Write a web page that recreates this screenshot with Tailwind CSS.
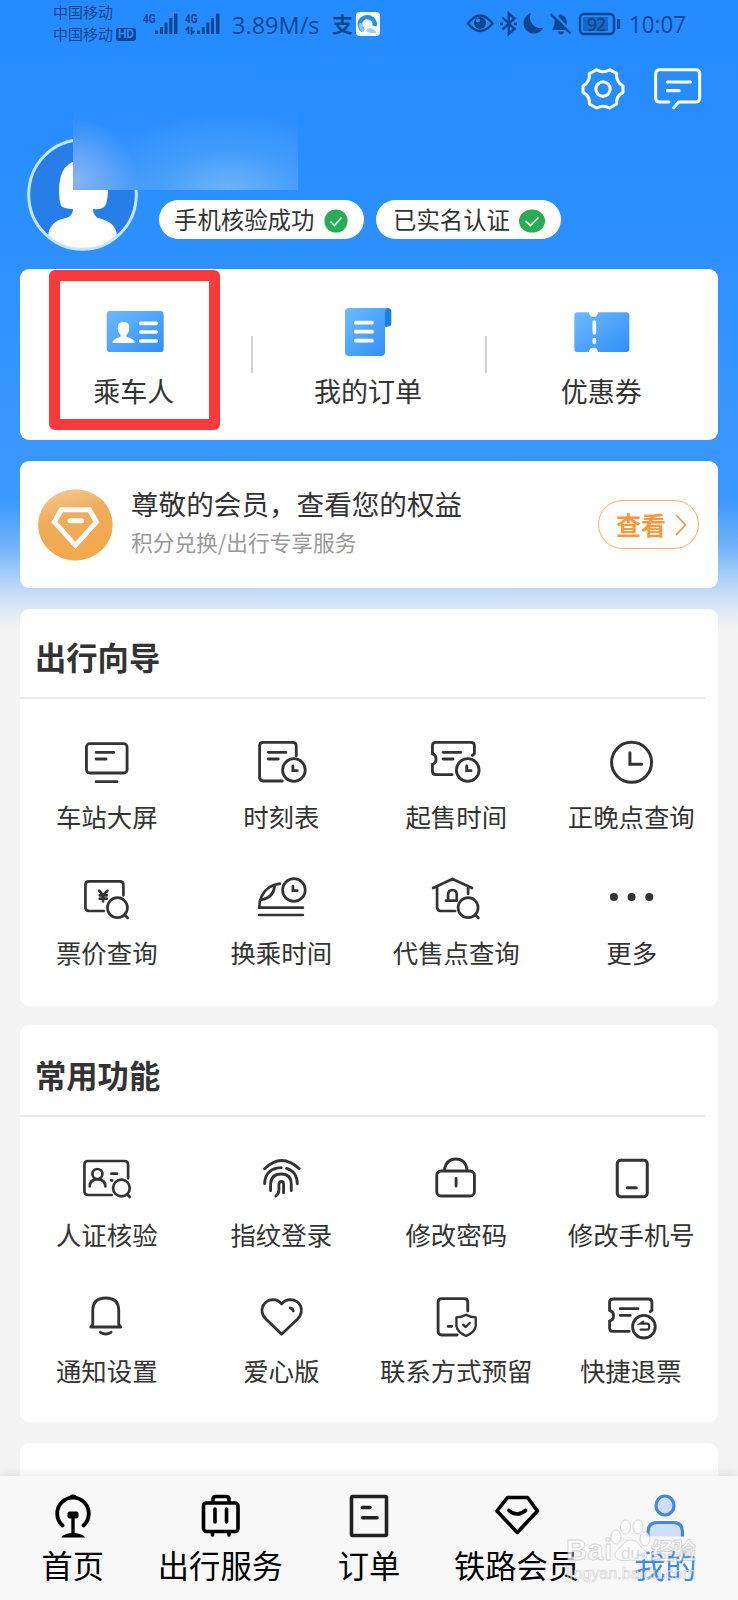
<!DOCTYPE html>
<html lang="zh-CN">
<head>
<meta charset="utf-8">
<title>我的</title>
<script src="https://cdn.jsdelivr.net/npm/@tailwindcss/browser@4"></script>
</head>
<body class="w-[738px] h-[1600px] overflow-hidden bg-[#f4f4f4] text-[#333] font-['Noto_Sans_CJK_SC','Noto_Sans',sans-serif]">
<div class="relative w-[738px] h-[1600px] overflow-hidden flex flex-col bg-[linear-gradient(180deg,#248bff_0px,#2a8fff_200px,#3896ff_430px,#3b98fe_500px,#6fb2fb_545px,#bdd8f7_588px,#dbe7f6_607px,#f4f4f4_630px)]">

  <!-- status bar -->
  <header class="h-[50px] shrink-0 flex items-start pl-[53px] text-[#0d4690]">
    <div class="w-[90px] flex flex-col pt-[1px] text-[15px] leading-[22px]">
      <span>中国移动</span>
      <span class="flex items-center gap-[3px]">中国移动<b class="w-[20px] h-[13px] rounded-[3px] bg-[#0d4690] text-[#2a8dff] text-[12px] leading-[13px] text-center font-['Roboto',sans-serif]">HD</b></span>
    </div>
    <svg class="w-[80px] h-[40px] shrink-0" viewBox="143 0 80 40" fill="#0d4690">
      <text x="143" y="22.500" font-family="Roboto" font-weight="700" font-size="13" textLength="12.500" lengthAdjust="spacingAndGlyphs">4G</text>
      <text x="185" y="22.500" font-family="Roboto" font-weight="700" font-size="13" textLength="12.500" lengthAdjust="spacingAndGlyphs">4G</text>
      <path d="M155 30.500h3v3.500h-3zM160 27h3v7h-3zM164.500 22.500h3v11.500h-3zM169.300 18h3v16h-3zM174 13.500h3.500v20.500h-3.500zM197 30.500h3v3.500h-3zM201.700 27h3v7h-3zM206.300 22.500h3v11.500h-3zM211 18h3v16h-3zM216 13.500h3.500v20.500h-3.500z"/>
      <path d="M185.500 30l3-2.500v6.500M194.500 31l-3 2.500v-6.500" fill="none" stroke="#0d4690" stroke-width="1.800"/>
    </svg>
    <span class="w-[100px] pl-[9px] pt-[9px] text-[24.500px] leading-[32px] font-['Open_Sans',sans-serif]"><span class="inline-block origin-left scale-x-[.96] whitespace-nowrap">3.89M/s</span></span>
    <span class="w-[33px] pl-[9px] pt-[11px] text-[21px] leading-[24px] font-bold">支</span>
    <svg class="w-[24px] h-[24px] mt-[12px] shrink-0" viewBox="0 0 24 24"><rect width="24" height="24" rx="4" fill="#f4f9ff"/><path d="M7 18A7.500 7 0 1 1 18.500 14" fill="none" stroke="#2a8fe0" stroke-width="4.500"/><path d="M5 11a7 7 0 0 0 3 8" fill="none" stroke="#8cc4f2" stroke-width="3.500"/><path d="M11 17q5-3 10 4q-7 1-11-2z" fill="#9fd0f6"/></svg>
    <svg class="w-[160px] h-[40px] ml-[81px] shrink-0" viewBox="461 0 160 40" fill="none" stroke="#0d4690" stroke-width="2.400">
      <path d="M468 23.500q12-16 24.500 0q-12.500 15-24.500 0z"/><circle cx="480" cy="23" r="6" fill="#0d4690" stroke="none"/><circle cx="478" cy="20.500" r="2" fill="#2a8dff" stroke="none"/>
      <path d="M502.500 17.500l12 11.500-5.700 5v-20.500l5.700 5-12 11"/><path d="M500 23.800h3M514 23.800h3" stroke-width="2.800"/>
      <path d="M531 13a10.500 10.500 0 1 0 12.500 14.500A10.500 10.500 0 0 1 531 13z" fill="#0d4690" stroke="none"/>
      <path d="M551.500 30h18q-3-3-3-8a6 6 0 0 0-4-6.500q-2-3-4 0q-4 1.500-4 6.500 0 5-3 8zM558 31.500h6a3 3 0 0 1-6 0z" fill="#0d4690" stroke="none"/><path d="M552.500 12.500l20 20" stroke="#2489fb" stroke-width="2.500"/><path d="M550.500 14l20 19.500"/>
      <rect x="580" y="14" width="34" height="20" rx="4"/><rect x="583" y="17" width="25" height="14" fill="#1769c8" stroke="none"/><path d="M618.500 19v10" stroke-width="2.800"/>
      <text x="587" y="30.500" font-family="Open Sans" font-size="17.500" textLength="19" fill="#0d4690" stroke="#0d4690" stroke-width=".5">92</text>
    </svg>
    <span class="pl-[8px] pt-[8px] text-[24px] leading-[32px] font-['Open_Sans',sans-serif]"><span class="inline-block origin-left scale-x-[.93] whitespace-nowrap">10:07</span></span>
  </header>

  <!-- settings and messages -->
  <div class="h-[70px] shrink-0 flex justify-end items-start pt-[15px] pr-[34px] gap-[25px]">
    <svg class="w-[48px] h-[48px]" viewBox="536 196 144 144" fill="none" stroke="#fff" stroke-width="9" stroke-linejoin="round"><path d="M589 210Q608 222 628 210L649 222Q646 246 668 259V278Q646 290 649 313L628 325Q608 314 589 325L567 313Q570 290 548 278V259Q570 246 567 222Z"/><circle cx="608" cy="268" r="21.500"/></svg>
    <svg class="w-[52px] h-[48px]" viewBox="756 196 156 144" fill="none" stroke="#fff" stroke-width="9" stroke-linecap="round" stroke-linejoin="round"><path d="M807 307H780Q767 307 767 295V222Q767 210 780 210H886Q899 210 899 222V295Q899 307 886 307H836L821 324"/><path d="M802 247H871M802 273H837" stroke-width="9.500"/></svg>
  </div>

  <!-- profile -->
  <section class="relative h-[149px] shrink-0 flex">
    <svg class="w-[112px] h-[116px] ml-[26.500px] mt-[16px]" viewBox="27 136 112 116">
      <clipPath id="av"><ellipse cx="82.500" cy="194.500" rx="54.500" ry="55.500"/></clipPath>
      <g clip-path="url(#av)"><rect x="27" y="136" width="112" height="116" fill="#287ee8"/><path d="M59 191Q59 160 83 160Q108 160 108 188Q108 201 105 206Q101 210 93 209Q93 215 98 218Q117 222 117 237V252H48V237Q49 221 66 218Q73 216 73 209Q65 209 61 206Q59 199 59 191Z" fill="#fff"/></g>
      <ellipse cx="82.500" cy="194.500" rx="53.800" ry="54.800" fill="none" stroke="#c4e6ff" stroke-width="3"/>
    </svg>
    <div class="flex items-start gap-[12px] ml-[20px] mt-[80px]">
      <div class="w-[205.500px] h-[39px] rounded-full bg-white flex items-center pl-[15.500px] text-[23.400px] leading-[39px] whitespace-nowrap">手机核验成功<svg class="w-[24px] h-[24px] ml-[10px] mt-[2px]" viewBox="0 0 24 24"><circle cx="12" cy="12" r="11.600" fill="#2aab57"/><path d="M6.500 12.500l4 4 7-8" fill="none" stroke="#e3f7e8" stroke-width="1.700"/></svg></div>
      <div class="w-[185px] h-[39px] rounded-full bg-white flex items-center pl-[17px] text-[23.400px] leading-[39px] whitespace-nowrap">已实名认证<svg class="w-[26px] h-[24px] ml-[9px] mt-[2px]" viewBox="0 0 26 24"><ellipse cx="13" cy="12" rx="13" ry="11.600" fill="#2aab57"/><path d="M6.500 12l5 4.500 8-8" fill="none" stroke="#e3f7e8" stroke-width="1.700"/></svg></div>
    </div>
    <!-- masked user name -->
    <div class="absolute left-[73px] top-[-8px] w-[225px] h-[78px] bg-[radial-gradient(ellipse_60px_60px_at_4px_68px,#86b4f5_0%,#86b4f500_100%),radial-gradient(ellipse_135px_78px_at_155px_78px,#6cb3fa_0%,#4ea3fca0_50%,#2a8fff00_100%),linear-gradient(180deg,#2a8eff,#3391fc_60%,#439afa)]"></div>
  </section>

  <!-- shortcuts -->
  <section class="relative h-[171px] mx-[20px] shrink-0 rounded-[9px] bg-white flex text-[27px] leading-[36px]">
    <div class="flex-1 flex flex-col items-center pr-[4px]">
      <svg class="w-[60px] h-[56px] mt-[35px] mb-[13px]" viewBox="316 132 180 168"><defs><linearGradient id="g" x1="0" y1="0" x2="1" y2="1"><stop stop-color="#6bbcff"/><stop offset="1" stop-color="#318df8"/></linearGradient></defs><rect x="321" y="153" width="171" height="123" rx="10" fill="url(#g)"/><path d="M354 202Q354 186 372 186Q389 186 389 202Q389 218 380 225V230Q406 237 406 249H338Q338 237 363 230V225Q354 217 354 202Z" fill="#fff"/><path d="M423 190H470M423 216H470M423 243H470" stroke="#fff" stroke-width="11" stroke-linecap="round"/></svg>
      <span class="-translate-x-px">乘车人</span>
    </div>
    <div class="flex-1 flex flex-col items-center pr-[4px]">
      <svg class="w-[60px] h-[56px] mt-[35px] mb-[13px]" viewBox="57 72 180 168"><path d="M192 84H206Q217 84 217 95V130Q217 140 206 140H192Z" fill="#1c7fd8"/><path d="M90 84H209Q198 86 198 98V216Q198 228 186 228H90Q78 228 78 216V96Q78 84 90 84Z" fill="url(#g)"/><path d="M110 128H159M110 155H159M110 182H159" stroke="#fff" stroke-width="11" stroke-linecap="round"/></svg>
      <span>我的订单</span>
    </div>
    <div class="flex-1 flex flex-col items-center pr-[2px]">
      <svg class="w-[60px] h-[56px] mt-[35px] mb-[13px]" viewBox="755 72 180 168"><path d="M773 97H808Q811 111 823 111Q833 111 837 97H922Q930 97 930 105V208Q930 216 922 216H837Q833 203 823 203Q811 203 808 216H773Q765 216 765 208V105Q765 97 773 97Z" fill="url(#g)"/><path d="M825 126V158M825 179V187" stroke="#fff" stroke-width="11" stroke-linecap="round"/></svg>
      <span>优惠券</span>
    </div>
    <i class="absolute left-[231px] top-[67px] w-[2px] h-[37px] bg-[#d2d2d2]"></i>
    <i class="absolute left-[465px] top-[67px] w-[2px] h-[37px] bg-[#d2d2d2]"></i>
    <div class="absolute left-[29px] top-[1px] w-[171px] h-[160px] border-[11px] border-[#f93a3c] rounded-[6px]"></div>
  </section>

  <!-- membership -->
  <section class="h-[127px] mx-[20px] mt-[21px] shrink-0 rounded-[9px] bg-white flex items-center pl-[18px] pr-[19px]">
    <svg class="w-[75px] h-[72px]" viewBox="114 116 225 216"><defs><linearGradient id="o" x1="0" y1="0" x2=".3" y2="1"><stop stop-color="#f7cd9b"/><stop offset=".45" stop-color="#efac5b"/><stop offset="1" stop-color="#f2a94c"/></linearGradient></defs><ellipse cx="226" cy="223.500" rx="112" ry="107" fill="url(#o)"/><path d="M184 178H268L289 215L226 285L163 215Z" fill="none" stroke="#fff" stroke-width="15"/><path d="M210 211H245" stroke="#fff" stroke-width="15" stroke-linecap="round"/></svg>
    <div class="ml-[18px] flex-1 flex flex-col whitespace-nowrap pb-[3px]">
      <span class="text-[27.600px] leading-[38px]">尊敬的会员，查看您的权益</span>
      <span class="text-[21.700px] leading-[40px]  text-[#999]">积分兑换/出行专享服务</span>
    </div>
    <div class="w-[101px] h-[49px] border-[1.500px] border-[#f7b066] rounded-full flex items-center pl-[17px] text-[25px] leading-[36px] font-bold text-[#fb963a] whitespace-nowrap"><span class="-mt-[2px]">查看</span><svg class="w-[12px] h-[22px] ml-[9px]" viewBox="0 0 12 22"><path d="M1 1l9.500 10L1 21" fill="none" stroke="#fb963a" stroke-width="1.800"/></svg></div>
  </section>

  <!-- travel guide -->
  <section class="h-[397px] mx-[20px] mt-[21px] shrink-0 rounded-[9px] bg-white">
    <h2 class="h-[90px] mr-[13px] pl-[15px] pt-[26px] border-b-2 border-[#e9e9e9] text-[31.300px] leading-[44px] font-bold">出行向导</h2>
    <div class="grid grid-cols-4 pt-[39px] gap-y-[42px] text-[25.400px] leading-[32px] whitespace-nowrap">
      <div class="flex flex-col items-center gap-[12px] pr-px"><svg class="w-[60px] h-[50px]" viewBox="111.750 54 180 150" fill="none" stroke="#333" stroke-width="8.500" stroke-linecap="round"><rect x="140" y="71" width="122" height="88" rx="10"/><path d="M169 97H222M169 117H199M169 185H232"/></svg>车站大屏</div>
      <div class="flex flex-col items-center gap-[12px] pr-px"><svg class="w-[60px] h-[50px]" viewBox="635.250 54 180 150" fill="none" stroke="#333" stroke-width="8.500" stroke-linecap="round"><path d="M729 183H672Q661 183 661 172V78Q661 67 672 67H760Q771 67 771 78V107M687 97H740M687 117H717"/><circle cx="764" cy="150" r="34"/><path d="M761 138V152H774"/></svg>时刻表</div>
      <div class="flex flex-col items-center gap-[12px]"><svg class="w-[60px] h-[50px]" viewBox="138.750 54 180 150" fill="none" stroke="#333" stroke-width="8.500" stroke-linecap="round"><path d="M217 164H168Q158 164 158 154V133Q169 130 169 117Q169 105 158 101V77Q158 67 168 67H274Q284 67 284 77V101L278 106M190 97H243M190 117H220"/><circle cx="264" cy="150" r="34"/><path d="M261 138V152H274"/></svg>起售时间</div>
      <div class="flex flex-col items-center gap-[12px]"><svg class="w-[60px] h-[50px]" viewBox="662.250 54 180 150" fill="none" stroke="#333" stroke-width="9" stroke-linecap="round"><circle cx="754" cy="127" r="60"/><path d="M749 98V133H784"/></svg><span class="translate-x-[0.5px]">正晚点查询</span></div>
      <div class="flex flex-col items-center gap-[12px] pr-px"><svg class="w-[60px] h-[50px]" viewBox="111.750 462 180 150" fill="none" stroke="#333" stroke-width="8" stroke-linecap="round"><path d="M192 573H148Q137 573 137 562V495Q137 484 148 484H240Q251 484 251 495V526M178 512L190 526L203 512M190 526V544M180 526H201M180 536H201"/><circle cx="233" cy="563" r="30"/><path d="M255 585L264 594"/></svg>票价查询</div>
      <div class="flex flex-col items-center gap-[12px] pr-px"><svg class="w-[60px] h-[50px]" viewBox="635.250 462 180 150" fill="none" stroke="#333" stroke-width="8" stroke-linecap="round"><circle cx="764" cy="510" r="34"/><path d="M761 498V512H774M722 491Q682 496 667 529Q660 543 660 563H791M660 585H791M706 497Q704 533 667 539"/></svg>换乘时间</div>
      <div class="flex flex-col items-center gap-[12px]"><svg class="w-[60px] h-[50px]" viewBox="138.750 462 180 150" fill="none" stroke="#333" stroke-width="8" stroke-linecap="round"><path d="M160 504L218 477L277 504M172 502V562Q172 573 183 573H226M265 502V522M199 542H231M205 540V525Q205 510 218 510Q231 510 231 525V538"/><circle cx="265" cy="563" r="30"/><path d="M287 585L296 594"/></svg>代售点查询</div>
      <div class="flex flex-col items-center gap-[12px]"><svg class="w-[60px] h-[50px]" viewBox="662.250 462 180 150" fill="#333"><circle cx="701" cy="531" r="12"/><circle cx="754" cy="531" r="12"/><circle cx="807" cy="531" r="12"/></svg><span class="translate-x-px">更多</span></div>
    </div>
  </section>

  <!-- common functions -->
  <section class="h-[397px] mx-[20px] mt-[19px] shrink-0 rounded-[9px] bg-white">
    <h2 class="h-[92px] mr-[13px] pl-[15px] pt-[28px] border-b-2 border-[#e9e9e9] text-[31.300px] leading-[44px] font-bold">常用功能</h2>
    <div class="grid grid-cols-4 pt-[36px] gap-y-[41px] text-[25.400px] leading-[32px] whitespace-nowrap">
      <div class="flex flex-col items-center gap-[15px] pr-px"><svg class="w-[60px] h-[50px]" viewBox="111.750 39 180 150" fill="none" stroke="#333" stroke-width="8" stroke-linecap="round"><path d="M216 165H145Q134 165 134 154V74Q134 63 145 63H254Q265 63 265 74V115M215 101H232M214 121H217"/><circle cx="173" cy="102" r="15"/><path d="M150 139Q150 118 173 118Q196 118 197 139"/><circle cx="245" cy="144" r="25"/><path d="M263 163L270 171"/></svg>人证核验</div>
      <div class="flex flex-col items-center gap-[15px] pr-px"><svg class="w-[60px] h-[50px]" viewBox="635.250 39 180 150" fill="none" stroke="#333" stroke-width="8.500" stroke-linecap="round"><path d="M676 86Q727 37 780 86M726 83Q678 85 676 131M742 85Q774 95 774 131M694 152V132Q696 102 726 102Q756 102 756 133V152M733 158V132Q733 124 727 124Q719 124 719 134V150Q719 160 710 168"/></svg>指纹登录</div>
      <div class="flex flex-col items-center gap-[15px]"><svg class="w-[60px] h-[50px]" viewBox="138.750 39 180 150" fill="none" stroke="#333" stroke-width="8.500" stroke-linecap="round"><rect x="171" y="93" width="113" height="75" rx="13"/><path d="M194 89Q200 57 228 57Q257 57 262 89M229 115V138"/></svg>修改密码</div>
      <div class="flex flex-col items-center gap-[15px]"><svg class="w-[60px] h-[50px]" viewBox="662.250 39 180 150" fill="none" stroke="#333" stroke-width="9" stroke-linecap="round"><rect x="711" y="61" width="90" height="109" rx="10"/><path d="M741 143H768"/></svg><span class="translate-x-[0.5px]">修改手机号</span></div>
      <div class="flex flex-col items-center gap-[13px] pr-px"><svg class="w-[60px] h-[50px]" viewBox="111.750 453 180 150" fill="none" stroke="#333" stroke-width="8.500" stroke-linecap="round" stroke-linejoin="round"><path d="M159 553V512Q159 474 198 474Q237 474 237 512V553L243 561H153ZM182 577Q198 587 214 577"/></svg>通知设置</div>
      <div class="flex flex-col items-center gap-[13px] pr-px"><svg class="w-[60px] h-[50px]" viewBox="635.250 453 180 150" fill="none" stroke="#333" stroke-width="8.500" stroke-linecap="round" stroke-linejoin="round"><path d="M727 583L680 537Q662 519 671 498Q680 480 701 479Q717 479 727 492Q737 479 754 479Q775 480 784 498Q792 519 775 537ZM753 504Q760 505 762 513"/></svg>爱心版</div>
      <div class="flex flex-col items-center gap-[13px]"><svg class="w-[60px] h-[50px]" viewBox="138.750 453 180 150" fill="none" stroke="#333" stroke-width="8.500" stroke-linecap="round" stroke-linejoin="round"><path d="M232 585H186Q175 585 175 574V487Q175 476 186 476H253Q264 476 264 487V513M205 559H216"/><path d="M259 524Q272 532 288 532V558Q286 576 259 588Q232 576 230 558V532Q246 532 259 524ZM250 554L258 561L270 549" stroke-width="7"/></svg>联系方式预留</div>
      <div class="flex flex-col items-center gap-[13px]"><svg class="w-[60px] h-[50px]" viewBox="662.250 453 180 150" fill="none" stroke="#333" stroke-width="8.500" stroke-linecap="round"><path d="M747 574H698Q688 574 688 564V543Q700 540 700 527Q700 515 688 511V487Q688 477 698 477H805Q815 477 815 487V511L810 515M720 506H773M720 526H750"/><circle cx="791" cy="560" r="34"/><path d="M789 545L780 551H801Q807 551 807 560Q807 569 800 569H781" stroke-width="6.500"/></svg>快捷退票</div>
    </div>
  </section>

  <section class="h-[33px] mx-[20px] mt-[21px] shrink-0 rounded-t-[9px] bg-white"></section>

  <!-- tab bar -->
  <nav class="relative h-[124px] shrink-0 bg-[#f8f8f8] shadow-[0_-3px_10px_rgba(0,0,0,0.08)] grid grid-cols-5 text-[31.300px] leading-[40px] text-black whitespace-nowrap">
    <div class="flex flex-col items-center pt-[15px] gap-[4px]"><svg class="w-[50px] h-[50px]" viewBox="0 0 50 50" fill="none" stroke="#000" stroke-width="3.800" stroke-linecap="round"><path d="M13.500 34.500A15.800 16 0 1 1 34.500 34.500"/><path d="M19 8Q20 3.500 24 3.500Q28 3.500 29 8Z" fill="#000" stroke="none"/><rect x="18.500" y="20.500" width="11" height="7" rx="2" fill="#000" stroke="none"/><path d="M24 26V43" stroke-width="3.400"/><path d="M12.500 46.500Q13 43.500 22 42H26Q35 43.500 36 46.500Z" fill="#000" stroke="none"/></svg><span class="-translate-x-px">首页</span></div>
    <div class="flex flex-col items-center pt-[15px] gap-[4px]"><svg class="w-[50px] h-[50px]" viewBox="0 0 50 50" fill="none" stroke="#000" stroke-width="3.600" stroke-linecap="round"><rect x="7.500" y="12" width="34.500" height="28.500" rx="3"/><path d="M17 11V8Q17 5.500 20 5.500H30Q33 5.500 33 8V11"/><path d="M19 18V31M30.500 18V31M16.500 42V44M33 42V44"/></svg><span class="-translate-x-px">出行服务</span></div>
    <div class="flex flex-col items-center pt-[15px] gap-[4px]"><svg class="w-[50px] h-[50px]" viewBox="0 0 50 50" fill="none" stroke="#222" stroke-width="3.600" stroke-linecap="round"><rect x="7.500" y="5.500" width="35" height="39" rx="1"/><path d="M18.500 16.500H26M18.500 26.800H33"/></svg><span>订单</span></div>
    <div class="flex flex-col items-center pt-[15px] gap-[4px]"><svg class="w-[50px] h-[50px]" viewBox="0 0 50 50" fill="none" stroke="#000" stroke-width="3.600" stroke-linecap="round" stroke-linejoin="round"><path d="M15.500 6.500H35.500L45.500 20L25.300 41.500L5 20ZM17 19.500Q25 26.500 33.500 19.500"/></svg><span>铁路会员</span></div>
    <div class="flex flex-col items-center pt-[15px] gap-[4px] text-[#3c8ce4]"><svg class="w-[50px] h-[50px]" viewBox="0 0 50 50" fill="#cfdefb" stroke="#4486e0" stroke-width="3.200"><ellipse cx="26" cy="14.500" rx="9" ry="9.500"/><path d="M9 45.500V41Q9 31.500 18.500 31.500H34Q43.500 31.500 43.500 41V45.500"/></svg><span class="translate-x-px">我的</span></div>
    <!-- site watermark -->
    <svg class="absolute left-[560px] top-[40px] w-[145px] h-[75px]" viewBox="560 1516 145 75" fill="#fff" fill-opacity=".75" stroke="#aaa" stroke-opacity=".5" stroke-width=".9" font-family="Liberation Sans, Noto Sans CJK SC, sans-serif">
      <text x="566" y="1560" font-size="29" font-weight="700" textLength="46">Bai</text>
      <ellipse cx="616" cy="1537" rx="5" ry="7"/><ellipse cx="625.500" cy="1527" rx="5" ry="7"/><ellipse cx="638" cy="1527" rx="5" ry="7"/><ellipse cx="645" cy="1539" rx="5" ry="7"/>
      <path d="M631 1540Q637 1540 640 1546Q650 1553 646 1558Q642 1562 631 1560Q620 1562 616 1558Q612 1553 622 1546Q625 1540 631 1540Z"/>
      <text x="621" y="1559" font-size="17" textLength="19" fill="#bbb" fill-opacity=".5" stroke="none">du</text>
      <text x="651" y="1559" font-size="23" font-weight="700" textLength="45">经验</text>
      <text x="566" y="1579" font-size="16" textLength="130" stroke-width=".6" fill-opacity=".6">jingyan.baidu.com</text>
    </svg>
  </nav>
</div>
</body>
</html>
